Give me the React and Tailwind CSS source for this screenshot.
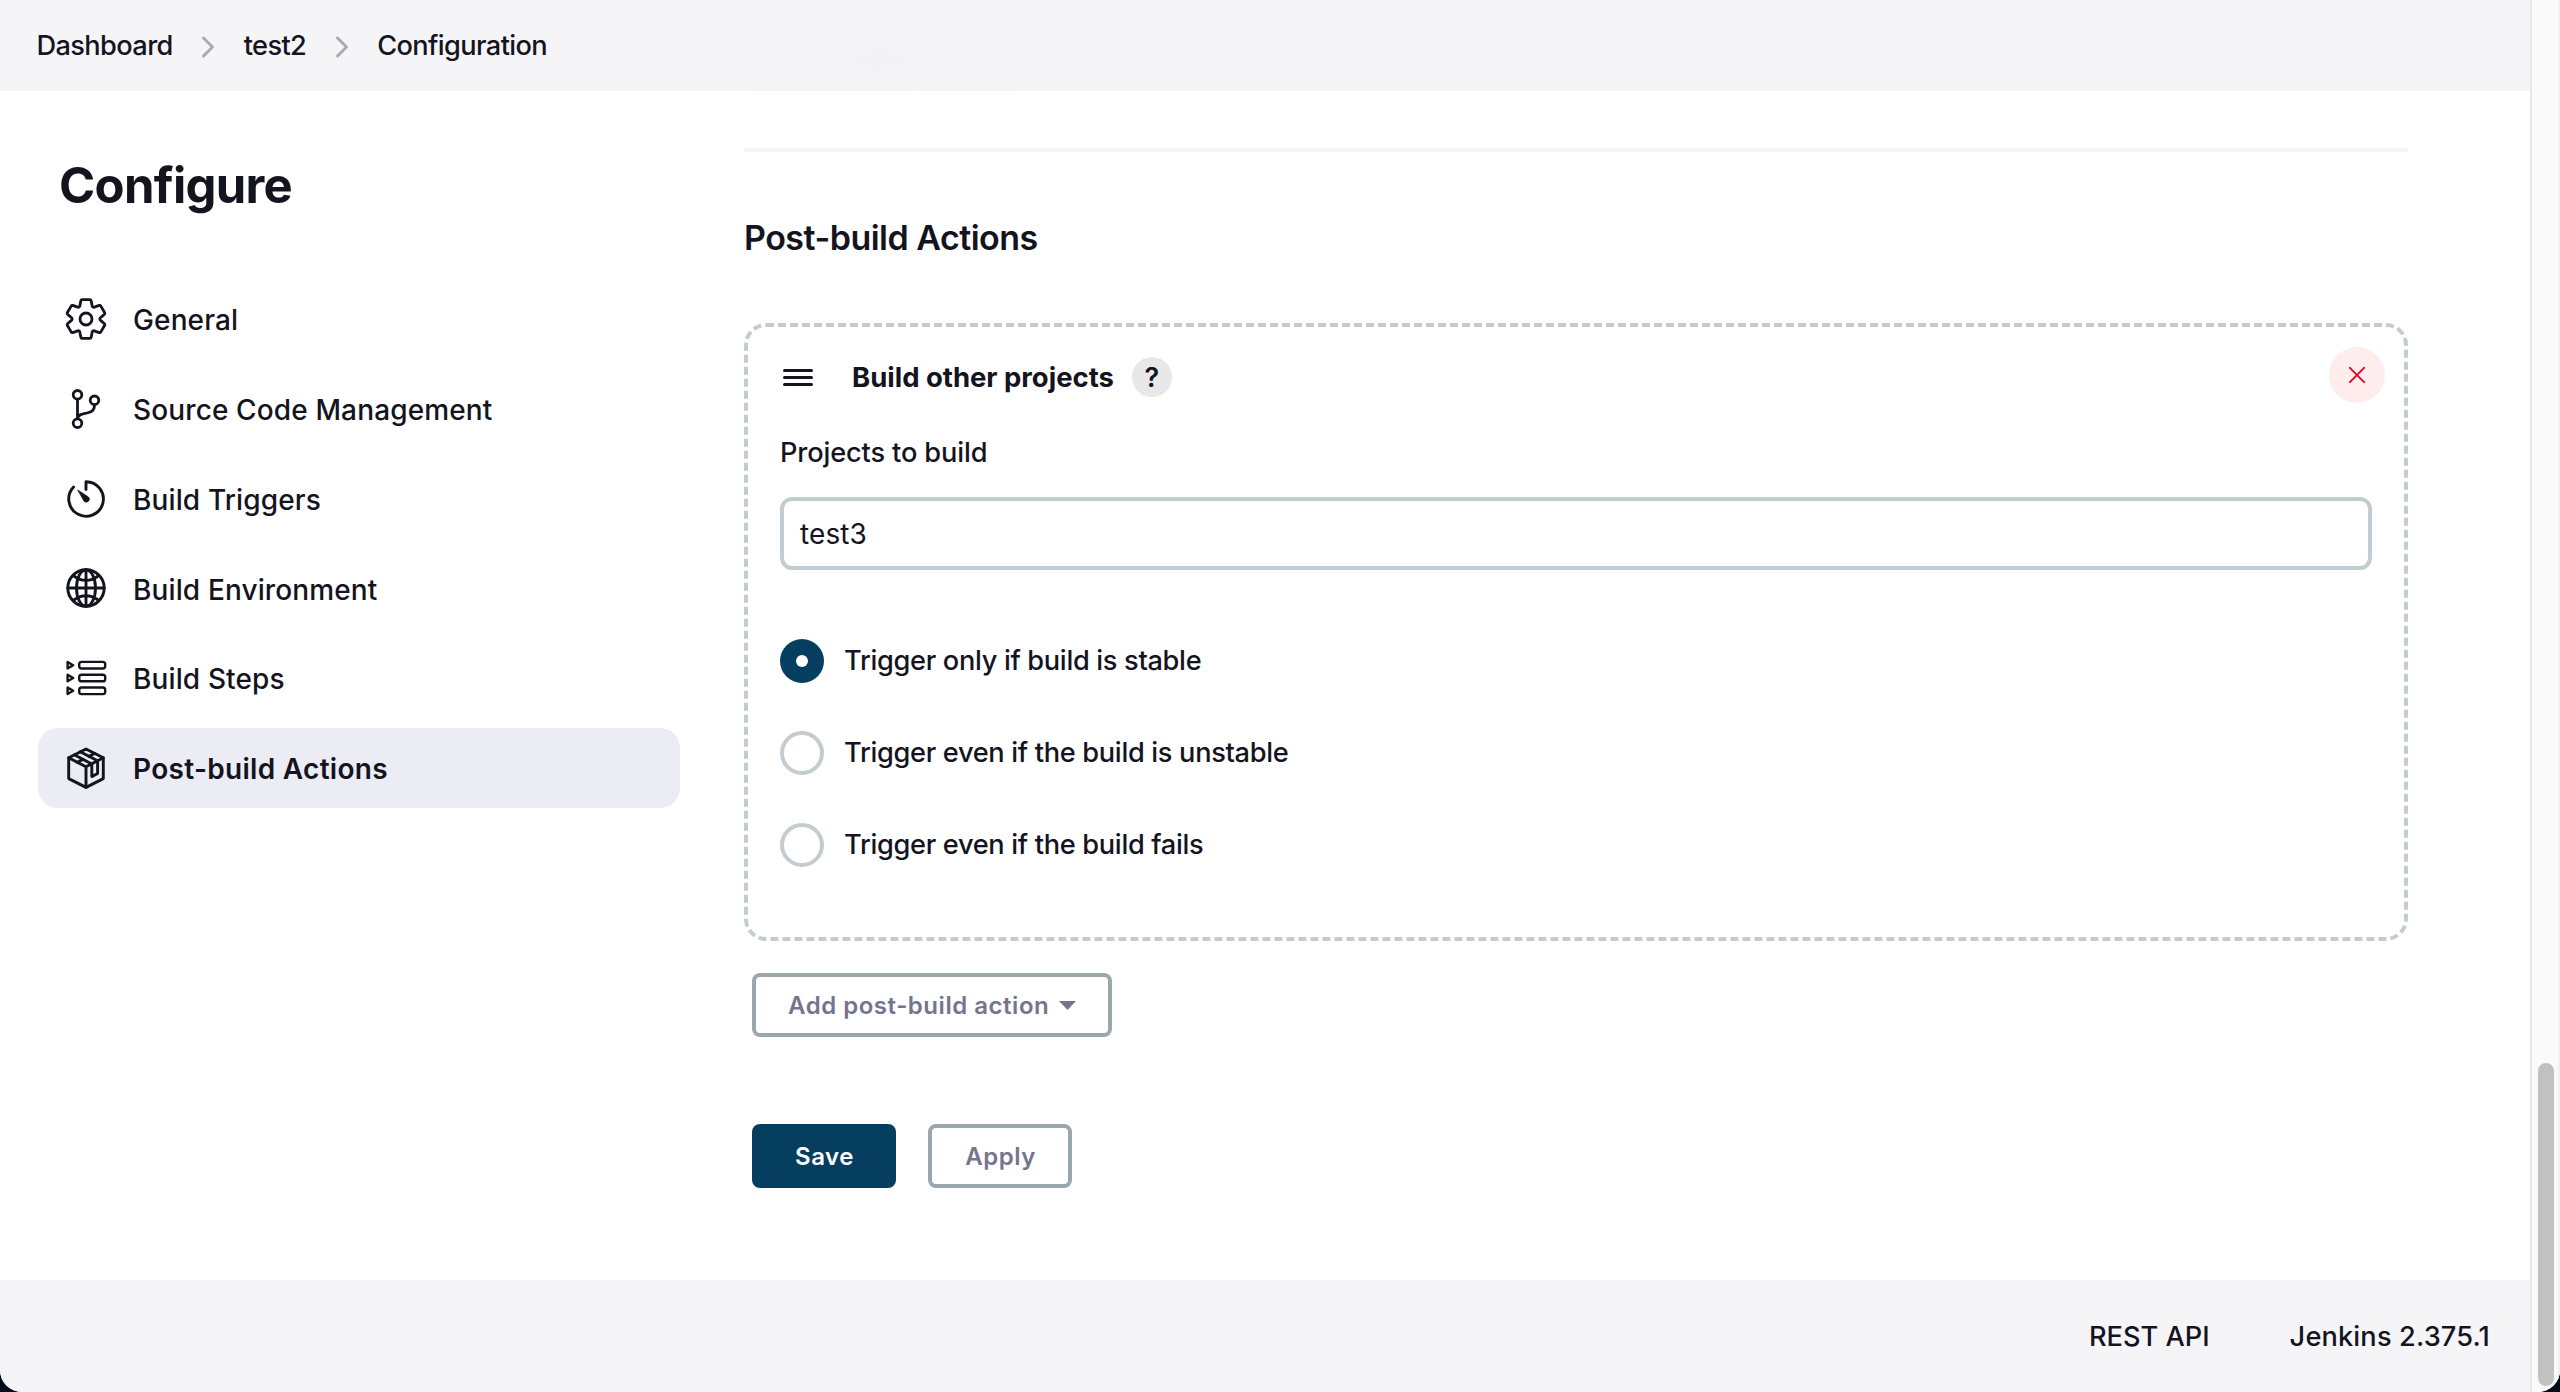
const stroke = {
  fill: "none",
  stroke: "currentColor",
  strokeLinecap: "round",
  strokeLinejoin: "round",
};

const iconClass = "block h-[42px] w-[42px] shrink-0 overflow-visible";

/* One gear outline made of six teeth, each rotated by 60 degrees. */
function gearPath() {
  const rot = (x, y, deg) => {
    const a = (deg * Math.PI) / 180;
    const rx = x * Math.cos(a) - y * Math.sin(a);
    const ry = x * Math.sin(a) + y * Math.cos(a);
    return rx.toFixed(2) + " " + ry.toFixed(2);
  };
  let d = "";
  for (let k = 0; k < 6; k++) {
    const a = k * 60;
    d += (k === 0 ? "M" : "L") + rot(-5.9, -14.4, a);
    d += "L" + rot(-5.1, -18.4, a) + "Q" + rot(-4.9, -19.3, a) + " " + rot(-4, -19.3, a);
    d += "L" + rot(4, -19.3, a) + "Q" + rot(4.9, -19.3, a) + " " + rot(5.1, -18.4, a);
    d += "L" + rot(5.9, -14.4, a);
    d += "Q" + rot(0, -12.2, a + 30) + " " + rot(-5.9, -14.4, a + 60);
  }
  return d + "Z";
}

function GearIcon() {
  return (
    <svg className={iconClass} viewBox="-21 -21 42 42" {...stroke} strokeWidth="2.8">
      <path d={gearPath()} />
      <circle r="6" />
    </svg>
  );
}

function BranchIcon() {
  return (
    <svg className={iconClass} viewBox="-21 -21 42 42" {...stroke} strokeWidth="2.8">
      <circle cx="-8.5" cy="-14.2" r="4.3" />
      <circle cx="-8.5" cy="14.2" r="4.3" />
      <circle cx="8.5" cy="-8.7" r="4.3" />
      <path d="M-8.5-9.7V9.7M8.5-4.2C8.5 2 5 3 1 4C-4 5.200-8.500 5.500-8.500 9.700" />
    </svg>
  );
}

function TimerIcon() {
  return (
    <svg className={iconClass} viewBox="-21 -21 42 42" {...stroke} strokeWidth="2.9">
      <path d="M0-9.500V-17.300A17.300 17.300 0 1 1-12.400-12" />
      <path
        d="M-8-8.800L2.300-2.100A3 3 0 1 1-1.800 2.300Z"
        fill="currentColor"
        stroke="currentColor"
        strokeWidth="0.8"
      />
    </svg>
  );
}

function GlobeIcon() {
  return (
    <svg className={iconClass} viewBox="-21 -21 42 42" {...stroke} strokeWidth="2.9">
      <circle r="18.200" />
      <ellipse rx="9.500" ry="18.200" />
      <path d="M0-18.200V18.200M-18.200 0H18.200M-12.200-12.200Q-7-7.700 0-7.700T12.200-12.200M-12.200 12.200Q-7 7.700 0 7.700T12.200 12.200" />
    </svg>
  );
}

function StepsIcon() {
  return (
    <svg className={iconClass} viewBox="-21 -21 42 42" {...stroke} strokeWidth="2.400">
      {[-12.8, 0, 12.8].map((y) => (
        <g key={y} transform={`translate(0 ${y})`}>
          <path d="M-18.400-3.200V3.200L-12.800 0Z" />
          <rect x="-6.800" y="-3.300" width="26" height="6.600" rx="2.400" />
        </g>
      ))}
    </svg>
  );
}

function PackageIcon() {
  return (
    <svg className={iconClass} viewBox="-21 -21 42 42" {...stroke} strokeWidth="2.900">
      <path d="M0-19L17.300-10.200V10.600L0 19.400L-17.300 10.600V-10.200Z" />
      <path d="M-17.300-10.200L0-1.200L17.300-10.200M0-1.200V19.400" />
      <path d="M-11.700-13.200L5.800-4V8.600L11.600 5.500V-7.200L-5.800-16.200" />
      <path d="M-8.700-5.700L-3-8.600M3-11.700L8.700-14.600" />
    </svg>
  );
}

const sections = [
  { label: "General", Icon: GearIcon },
  { label: "Source Code Management", Icon: BranchIcon },
  { label: "Build Triggers", Icon: TimerIcon },
  { label: "Build Environment", Icon: GlobeIcon },
  { label: "Build Steps", Icon: StepsIcon },
  { label: "Post-build Actions", Icon: PackageIcon, active: true },
];

const triggers = [
  { label: "Trigger only if build is stable", checked: true },
  { label: "Trigger even if the build is unstable" },
  { label: "Trigger even if the build fails" },
];

function Chevron() {
  return (
    <svg
      className="mx-[28.5px] block h-[22px] w-[14px] shrink-0"
      viewBox="0 0 14 22"
      fill="none"
      stroke="#a9a9bb"
      strokeWidth="2.9"
      strokeLinecap="round"
      strokeLinejoin="round"
    >
      <path d="M2.500 2L11.500 11L2.500 20" />
    </svg>
  );
}

function Breadcrumbs() {
  return (
    <header className="flex h-[91px] shrink-0 items-center bg-[#f5f5f8] bg-[radial-gradient(ellipse_180px_50px_at_880px_60px,#f3f3f7,#f5f5f8)] pt-[2px] pl-[36.5px] text-[27.2px] font-medium tracking-[-0.62px]">
      <span>Dashboard</span>
      <Chevron />
      <span>test2</span>
      <Chevron />
      <span>Configuration</span>
    </header>
  );
}

function Sidebar() {
  return (
    <aside className="w-[642px] shrink-0 pt-[65px]">
      <h1 className="h-[60px] pl-[21px] text-[49px] leading-[60px] font-bold tracking-[-0.7px]">
        Configure
      </h1>
      <nav className="mt-[63px] flex flex-col gap-[9.800px]">
        {sections.map(({ label, Icon, active }) => (
          <a
            key={label}
            className={
              active
                ? "flex h-20 items-center gap-[26px] rounded-[20px] bg-[#ececf5] pl-[27px] text-[28px] font-semibold tracking-[0.3px]"
                : "flex h-20 items-center gap-[26px] rounded-[20px] pl-[27px] text-[28px] font-medium tracking-[0.13px]"
            }
          >
            <Icon />
            <span className="pt-[2.500px]">{label}</span>
          </a>
        ))}
      </nav>
    </aside>
  );
}

function Radio({ label, checked }) {
  return (
    <label className="flex h-11 items-center gap-5">
      {checked ? (
        <span className="flex size-11 items-center justify-center rounded-full bg-[#063e60]">
          <span className="size-3 rounded-full bg-white" />
        </span>
      ) : (
        <span className="size-11 rounded-full border-4 border-[#c3ccd1] bg-white" />
      )}
      <span className="text-[27.2px] font-[450] tracking-[-0.320px]">{label}</span>
    </label>
  );
}

function BuildOtherProjects() {
  return (
    <section className="mt-[65px] h-[618px] rounded-[22px] border-4 border-dashed border-[#c3ccd1] px-8 pt-5">
      <div className="flex h-14 items-start">
        <div className="flex h-[60px] grow items-center">
          <div className="ml-[3px] flex w-[30px] flex-col gap-1">
            <span className="h-[3px] rounded-full bg-[#14141f]" />
            <span className="h-[3px] rounded-full bg-[#14141f]" />
            <span className="h-[3px] rounded-full bg-[#14141f]" />
          </div>
          <h3 className="ml-[39px] pt-[2px] text-[27.5px] font-bold tracking-[-0.02px]">
            Build other projects
          </h3>
          <span className="ml-[18px] flex size-10 items-center justify-center rounded-full bg-[#e8e8e8] pt-[2px] text-[27px] font-semibold">
            ?
          </span>
        </div>
        <button className="-mr-[13px] flex size-14 items-center justify-center rounded-full bg-[#ffedee]">
          <svg
            className="size-4"
            viewBox="0 0 16 16"
            fill="none"
            stroke="#e6001f"
            strokeWidth="1.800"
            strokeLinecap="round"
          >
            <path d="M0.700 0.700L15.300 15.300M15.300 0.700L0.700 15.300" />
          </svg>
        </button>
      </div>
      <div className="mt-[33px] h-[34px] text-[27.2px] leading-[34px] font-[450] tracking-[-0.130px]">
        Projects to build
      </div>
      <div className="mt-[27px] flex h-[73px] items-center rounded-[12px] border-4 border-[#c3ccd1] bg-white pl-4 text-[28px] tracking-[0.1px]">
        test3
      </div>
      <div className="mt-[69px] flex flex-col gap-12">
        {triggers.map((t) => (
          <Radio key={t.label} {...t} />
        ))}
      </div>
    </section>
  );
}

function Main() {
  return (
    <main className="ml-16 w-[1664px] pt-[57px]">
      <div className="h-1 bg-[#f3f3f8]" />
      <h2 className="mt-[66px] h-10 text-[34px] leading-10 font-semibold tracking-[-0.520px]">
        Post-build Actions
      </h2>
      <BuildOtherProjects />
      <div className="ml-2 pt-8 text-[24px] font-semibold tracking-[0.530px]">
        <button className="flex h-16 w-[360px] items-center rounded-[8px] border-4 border-[#9aa8ae] pl-8 text-[#757490]">
          <span className="pt-[2px]">Add post-build action</span>
          <svg className="ml-[10px] h-[9px] w-[17px]" viewBox="0 0 17 9" fill="#757490">
            <path d="M0 0H17L8.500 9Z" />
          </svg>
        </button>
        <div className="mt-[87px] flex gap-8">
          <button className="h-16 w-36 rounded-[8px] bg-[#063e60] pt-[2px] pl-[1px] text-white">
            Save
          </button>
          <button className="h-16 w-36 rounded-[8px] border-4 border-[#9aa8ae] pt-[2px] pl-[1px] text-[#757490]">
            Apply
          </button>
        </div>
      </div>
    </main>
  );
}

export default function App() {
  return (
    <div className="h-[1392px] w-[2560px] bg-[#050c16] font-['Inter','Liberation_Sans',sans-serif] text-[#14141f]">
      <div className="flex h-full overflow-hidden rounded-b-[22px] bg-white">
        <div className="flex w-[2530px] flex-col">
          <Breadcrumbs />
          <div className="flex grow pl-[38px]">
            <Sidebar />
            <Main />
          </div>
          <footer className="flex h-28 shrink-0 items-center justify-end gap-[80px] bg-[#f5f5f8] pt-[2px] pr-[40px] text-[27.2px] font-medium">
            <span>REST API</span>
            <span className="tracking-[0.15px]">Jenkins 2.375.1</span>
          </footer>
        </div>
        <div className="flex w-[30px] flex-col items-center justify-end border-x-2 border-l-[#e8e8e8] border-r-[#f0f0f0] bg-[#fafafa] pr-[4px] pb-[6px] pl-[6px]">
          <div className="h-[323px] w-4 rounded-full bg-[#c1c1c1]" />
        </div>
      </div>
    </div>
  );
}
